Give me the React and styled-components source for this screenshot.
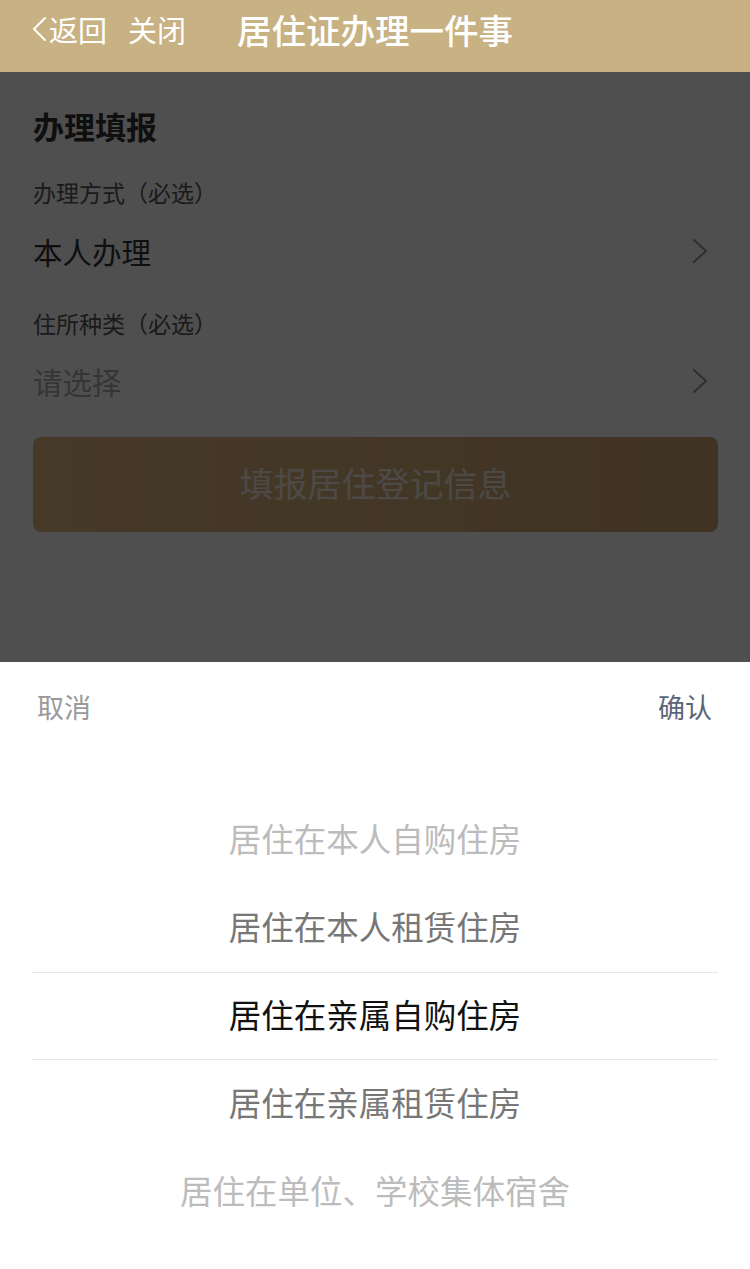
import React from "react";
import styled, { createGlobalStyle } from "styled-components";

const GlobalStyle = createGlobalStyle`
  html, body {
    margin: 0;
    padding: 0;
  }
  body {
    font-family: "Noto Sans CJK SC", "Noto Sans", sans-serif;
    -webkit-font-smoothing: antialiased;
  }
  * {
    box-sizing: border-box;
  }
`;

const options = [
  { text: "居住在本人自购住房", level: 2 },
  { text: "居住在本人租赁住房", level: 1 },
  { text: "居住在亲属自购住房", level: 0 },
  { text: "居住在亲属租赁住房", level: 1 },
  { text: "居住在单位、学校集体宿舍", level: 2 },
];

const Chevron = ({ color = "#999", w = 16, h = 26, stroke = 2.2, left }) => (
  <svg width={w} height={h} viewBox={`0 0 ${w} ${h}`} fill="none">
    {left ? (
      <polyline points={`${w - 2},2 2,${h / 2} ${w - 2},${h - 2}`} stroke={color} strokeWidth={stroke} strokeLinecap="round" strokeLinejoin="round" />
    ) : (
      <polyline points={`2,2 ${w - 2},${h / 2} 2,${h - 2}`} stroke={color} strokeWidth={stroke} strokeLinecap="round" strokeLinejoin="round" />
    )}
  </svg>
);

function App() {
  return (
    <Page>
      <GlobalStyle />
      <NavBar>
        <NavBtn>
          <Chevron color="#fff" w={15} h={26} stroke={2} left />
          <span>返回</span>
        </NavBtn>
        <NavBtn>关闭</NavBtn>
        <NavTitle>居住证办理一件事</NavTitle>
      </NavBar>

      <Form>
        <SectionTitle>办理填报</SectionTitle>
        <FieldLabel top={22}>办理方式（必选）</FieldLabel>
        <SelectRow top={11}>
          <SelectValue>本人办理</SelectValue>
          <Chevron />
        </SelectRow>
        <FieldLabel top={24}>住所种类（必选）</FieldLabel>
        <SelectRow top={10}>
          <SelectValue placeholder>请选择</SelectValue>
          <Chevron />
        </SelectRow>
        <SubmitBtn>填报居住登记信息</SubmitBtn>
      </Form>

      <Mask />

      <Sheet>
        <SheetHeader>
          <SheetAction>取消</SheetAction>
          <SheetAction confirm>确认</SheetAction>
        </SheetHeader>
        <Picker>
          {options.map((o) => (
            <PickerItem key={o.text} level={o.level}>
              {o.text}
            </PickerItem>
          ))}
        </Picker>
      </Sheet>
    </Page>
  );
}

export default App;

const Page = styled.div`
  position: relative;
  width: 750px;
  height: 1269px;
  background: #fff;
  overflow: hidden;
`;

const NavBar = styled.div`
  height: 72px;
  background: #c8b283;
  display: flex;
  align-items: center;
  padding: 0 0 14px 32px;
  color: #fff;
`;

const NavBtn = styled.div`
  display: flex;
  align-items: center;
  font-size: 29px;
  line-height: 40px;
  margin-right: 21px;

  svg {
    margin-right: 2px;
  }
`;

const NavTitle = styled.div`
  margin-left: 30px;
  font-size: 34.5px;
  font-weight: 500;
  line-height: 44px;
`;

const Form = styled.div`
  padding: 30px 32px 0 33px;
  display: flex;
  flex-direction: column;
`;

const SectionTitle = styled.div`
  font-size: 31px;
  font-weight: 700;
  line-height: 48px;
  color: #333;
`;

const FieldLabel = styled.div`
  margin-top: ${(p) => p.top}px;
  font-size: 23px;
  line-height: 40px;
  color: #555;
`;

const SelectRow = styled.div`
  margin-top: ${(p) => p.top}px;
  height: 56px;
  display: flex;
  align-items: center;
  justify-content: space-between;
  padding-right: 10px;
`;

const SelectValue = styled.div`
  font-size: 29.5px;
  color: ${(p) => (p.placeholder ? "#aaa" : "#333")};
`;

const SubmitBtn = styled.div`
  margin-top: 28px;
  height: 95px;
  border-radius: 8px;
  background: linear-gradient(90deg, #e0b882, #cea672);
  color: #f4ece2;
  font-size: 34px;
  display: flex;
  align-items: center;
  justify-content: center;
  padding-bottom: 4px;
`;

const Mask = styled.div`
  position: absolute;
  top: 72px;
  left: 0;
  right: 0;
  bottom: 0;
  background: rgba(0, 0, 0, 0.69);
`;

const Sheet = styled.div`
  position: absolute;
  left: 0;
  right: 0;
  bottom: 0;
  height: 607px;
  background: #fff;
`;

const SheetHeader = styled.div`
  height: 90px;
  display: flex;
  align-items: center;
  justify-content: space-between;
  padding: 0 38px 2px 37px;
`;

const SheetAction = styled.div`
  font-size: 27px;
  color: ${(p) => (p.confirm ? "#5c6578" : "#999")};
`;

const Picker = styled.div`
  padding: 44px 32px 0;
  display: flex;
  flex-direction: column;
`;

const PickerItem = styled.div`
  height: 88px;
  display: flex;
  align-items: center;
  justify-content: center;
  padding-bottom: 5px;
  font-size: 32.5px;
  color: ${(p) => (p.level === 0 ? "#111" : p.level === 1 ? "#777" : "#bcbcbc")};
  border-top: ${(p) => (p.level === 0 ? "1.5px solid #e8e8e8" : "none")};
  border-bottom: ${(p) => (p.level === 0 ? "1.5px solid #e8e8e8" : "none")};
`;
